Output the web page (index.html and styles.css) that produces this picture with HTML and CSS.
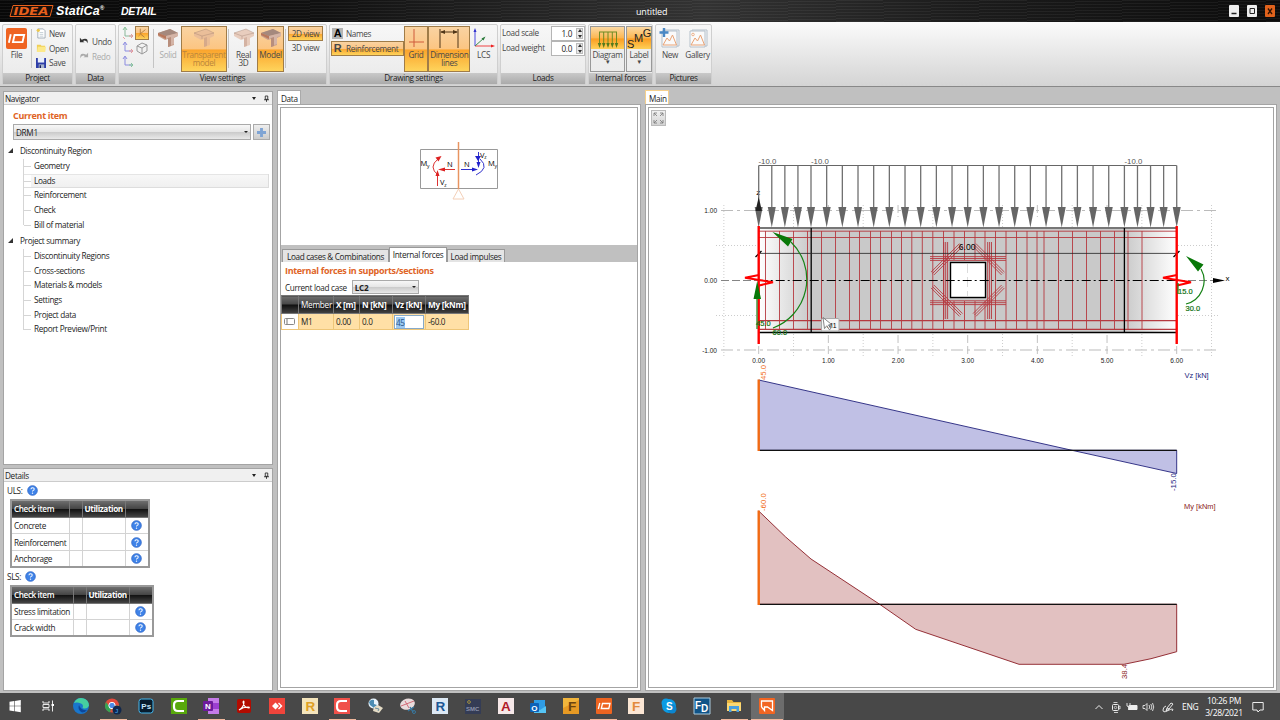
FILE: index.html
```html
<!DOCTYPE html>
<html lang="en">
<head>
    <meta charset="UTF-8">
    <meta name="viewport" content="width=device-width, initial-scale=1.0">
    <title>IDEA StatiCa Detail - untitled</title>
    <link rel="stylesheet" href="styles.css">
</head>
<body>
    <!-- shared symbols -->
    <svg class="defs">
        <symbol id="help" viewBox="0 0 12 12">
            <circle cx="6" cy="6" r="5.3" fill="#3f83e8" stroke="#2a62c4" stroke-width=".8"/>
            <path d="M4.3 4.7q0-1.7 1.8-1.7t1.7 1.5q0 .8-1 1.4-.8.5-.8 1.2" fill="none" stroke="#fff" stroke-width="1.1"/>
            <circle cx="6" cy="8.9" r=".75" fill="#fff"/>
        </symbol>
        <symbol id="beam" viewBox="0 0 22 20">
            <path d="M1 5l12-4 8 4v3l-4 2v7l-6 2v-8l-3 1-7-4z" fill="#c9a08c"/>
            <path d="M1 5l12-4 8 4-12 3z" fill="#a5897d"/>
            <path d="M1 5l8 3v3l-8-4z" fill="#b9785c"/>
            <path d="M9 8l12-3v3l-4 1v7l-6 2v-8l-2 1z" fill="#d4b4a6"/>
            <path d="M11 10l3-1v9l-3 1z" fill="#b88e7c"/>
        </symbol>
        <symbol id="beam-clear" viewBox="0 0 22 20">
            <path d="M1 5l12-4 8 4v3l-4 2v7l-6 2v-8l-3 1-7-4z" fill="#dfb29a" fill-opacity=".6"/>
            <path d="M1 5l8 3 12-3M1 5l12-4 8 4M9 8v3" fill="none" stroke="#96786a" stroke-opacity=".6" stroke-width=".6"/>
            <path d="M11 10l3-1v9l-3 1z" fill="#b88e7c" fill-opacity=".4"/>
        </symbol>
    </svg>

    <header class="titlebar">
        <svg class="brand" viewBox="0 0 44 14">
            <path d="M3.5 1.500h40l-3 11H.5z" fill="#17100c" stroke="#e8601c"/>
            <text x="4" y="11" textLength="35" lengthAdjust="spacingAndGlyphs">IDEA</text>
        </svg>
        <span class="brand-name">StatiCa<sup>®</sup></span>
        <span class="brand-product">DETAIL</span>
        <span class="doc-title">untitled</span>
        <div class="win-buttons">
            <svg viewBox="0 0 10 12"><path d="M2.500 8.500h5" stroke="#222" stroke-width="1.500"/></svg>
            <svg viewBox="0 0 10 12"><path d="M3 3.500h4.500v5H3z" fill="none" stroke="#222"/></svg>
            <svg class="close" viewBox="0 0 10 12"><path d="M3 3.500l4 5.500M7 3.500L3 9" stroke="#2c1000" stroke-width="1.300"/></svg>
        </div>
    </header>

    <div class="ribbon">
        <section class="group g-project">
            <div class="group-body">
                <div class="tool w-file">
                    <svg class="ico-file" viewBox="0 0 22 22">
                        <rect width="22" height="22" rx="2" fill="#ef6422"/>
                        <path d="M5 6.500L3 15.500M9 7.300h10l-1.700 7.500H7.300z" fill="none" stroke="#fff" stroke-width="2"/>
                    </svg>
                    <span>File</span>
                </div>
                <i class="sep"></i>
                <div class="stack menu">
                    <div><svg viewBox="0 0 11 11"><path d="M2 1h6l2 2v8H2z" fill="#fff" stroke="#8b98a6" stroke-width=".8"/><path d="M4 5h4M4 7h4M4 9h4" stroke="#9cabb8" stroke-width=".6"/><circle cx="2.500" cy="2.500" r="1.800" fill="#edc84c"/></svg>New</div>
                    <div><svg viewBox="0 0 11 11"><path d="M1 2h4l1 1h4v7H1z" fill="#f0cf57"/><path d="M1 10l1-6h9l-1 6z" fill="#fce98a"/></svg>Open</div>
                    <div><svg viewBox="0 0 11 11"><path d="M0 0h11v11H0z" fill="#2e3ea8"/><path d="M2 0h7v5H2z" fill="#e8eefc"/><path d="M3 7h6v4H3z" fill="#a8b4cc"/><path d="M4 8h1.500v3H4z" fill="#17205a"/></svg>Save</div>
                </div>
            </div>
            <h6>Project</h6>
        </section>

        <section class="group g-data">
            <div class="group-body">
                <div class="stack undo">
                    <div><svg viewBox="0 0 11 9"><path d="M1 1v5h5L4.400 4.500Q8 2.800 9.500 7 10.500 0 3 3z" fill="#333"/></svg>Undo</div>
                    <div class="off"><svg viewBox="0 0 11 9"><path d="M10 1v5H5l1.600-1.500Q3 2.800 1.500 7 .5 0 8 3z" fill="#aaa"/></svg>Redo</div>
                </div>
            </div>
            <h6>Data</h6>
        </section>

        <section class="group g-view">
            <div class="group-body">
                <div class="axes">
                    <svg viewBox="0 0 14 14"><path d="M4 2v8h7" fill="none" stroke="#8ab89a"/><path d="M8 10h4M10 8l2 2-2 2" fill="none" stroke="#e59a9a"/><path d="M2 4l2-3 2 3" fill="none" stroke="#87c59a"/><path d="M2 11l2 2" stroke="#e7a0a0"/></svg>
                    <svg class="on" viewBox="0 0 14 14"><path d="M5 2v6l5 4M5 8l6-5" fill="none" stroke="#aa783c"/><path d="M3 11l2-3" stroke="#d28c38"/></svg>
                    <svg viewBox="0 0 14 14"><path d="M4 2v8h7" fill="none" stroke="#8c8ce0"/><path d="M8 10h4M10 8l2 2-2 2" fill="none" stroke="#e59a9a"/><path d="M2 4l2-3 2 3" fill="none" stroke="#8c8ce0"/></svg>
                    <svg viewBox="0 0 14 14"><path d="M2 5l5-3 5 2v6l-5 3-5-3zM2 5l5 2 5-3M7 7v6" fill="none" stroke="#999"/></svg>
                    <svg viewBox="0 0 14 14"><path d="M4 2v8h7" fill="none" stroke="#8c8ce0"/><path d="M8 10h4M10 8l2 2-2 2" fill="none" stroke="#87c59a"/><path d="M2 4l2-3 2 3" fill="none" stroke="#8c8ce0"/></svg>
                </div>
                <i class="sep"></i>
                <div class="tool w-solid off"><svg class="ico"><use href="#beam"/></svg><span>Solid</span></div>
                <div class="tool w-trans on faded"><svg class="ico"><use href="#beam-clear"/></svg><span>Transparent<br>model</span></div>
                <i class="sep"></i>
                <div class="tool w-real"><svg class="ico"><use href="#beam-clear"/></svg><span>Real<br>3D</span></div>
                <div class="tool w-model on"><svg class="ico"><use href="#beam"/></svg><span>Model</span></div>
                <i class="sep"></i>
                <div class="views">
                    <div class="on">2D view</div>
                    <div>3D view</div>
                </div>
            </div>
            <h6>View settings</h6>
        </section>

        <section class="group g-drawing">
            <div class="group-body">
                <div class="labels">
                    <div><b class="letter dark">A</b>Names</div>
                    <div class="on"><b class="letter">R</b>Reinforcement</div>
                </div>
                <div class="tool w-grid on"><svg class="ico" viewBox="0 0 22 20"><path d="M9 1v18M4 14h15" stroke="#cf5b3b" fill="none"/></svg><span>Grid</span></div>
                <div class="tool w-dim on"><svg class="ico" viewBox="0 0 22 20"><path d="M2 1v19M20 1v19M3 4h16" stroke="#513719" fill="none"/><path d="M2 4l5-2v4zM20 4l-5-2v4z" fill="#513719"/></svg><span>Dimension<br>lines</span></div>
                <div class="tool w-lcs"><svg class="ico" viewBox="0 0 22 20"><path d="M2 18V2" stroke="#4b4be0"/><path d="M2 18h17" stroke="#e44"/><path d="M2 18l9-8" stroke="#3d8c4d"/><path d="M2 0L.5 4h3z" fill="#33c"/><path d="M22 18l-4-1.500v3z" fill="#e22"/><path d="M12.500 8.500l-4 2 2 2z" fill="#2b7a3b"/></svg><span>LCS</span></div>
            </div>
            <h6>Drawing settings</h6>
        </section>

        <section class="group g-loads">
            <div class="group-body">
                <div class="fields">
                    <label>Load scale</label><div class="spin"><span>1.0</span><i></i></div>
                    <label>Load weight</label><div class="spin"><span>0.0</span><i></i></div>
                </div>
            </div>
            <h6>Loads</h6>
        </section>

        <section class="group g-forces">
            <div class="group-body">
                <div class="tool drop w-diagram"><svg class="ico" viewBox="0 0 22 20"><path d="M2 4h18M2.500 4v13M6.700 4v13M11 4v13M15.300 4v13M19.500 4v13" stroke="#718b22" fill="none"/><path d="M.8 15h3.400l-1.700 5zM5 15h3.400l-1.700 5zM9.300 15h3.400L11 20zM13.600 15H17l-1.700 5zM17.800 15h3.400l-1.700 5z" fill="#557b1d"/></svg><span>Diagram</span><em>▾</em></div>
                <div class="tool drop w-label"><div class="smg"><b>S</b><b>M</b><b>G</b></div><span>Label</span><em>▾</em></div>
            </div>
            <h6>Internal forces</h6>
        </section>

        <section class="group g-pictures">
            <div class="group-body">
                <div class="tool w-new"><svg class="ico" viewBox="0 0 22 20"><path d="M5 2h15v16H5z" fill="#f5f7f9" stroke="#b5c0ca"/><path d="M3 3h15v16H3z" fill="#fafafa" stroke="#b5c0ca"/><path d="M4 17l4-7 2.500 3 3-6 4 10z" fill="none" stroke="#e9a274"/><path d="M5 0v9M.5 4.500h9" stroke="#4a88c4" stroke-width="2.400"/></svg><span>New</span></div>
                <div class="tool w-gallery"><svg class="ico" viewBox="0 0 22 20"><path d="M5 2h15v16H5z" fill="#f5f7f9" stroke="#b5c0ca"/><path d="M3 3h15v16H3z" fill="#fafafa" stroke="#b5c0ca"/><path d="M4 17l4-7 2.500 3 3-6 4 10z" fill="none" stroke="#e9a274"/><circle cx="6" cy="6.500" r="1.300" fill="none" stroke="#e9a274" stroke-width=".8"/></svg><span>Gallery</span></div>
            </div>
            <h6>Pictures</h6>
        </section>
    </div>

    <main class="workspace">
        <aside class="left">
            <section class="panel navigator">
                <div class="panel-head"><span>Navigator</span><i class="caret"></i><svg class="pin" viewBox="0 0 6 8"><path d="M1.500 1h3v4h-3zM0 5.500h6M3 5.500V8" fill="none" stroke="#222"/></svg></div>
                <h2>Current item</h2>
                <div class="item-row">
                    <div class="combo item-combo">DRM1<i class="caret"></i></div>
                    <div class="add"><svg viewBox="0 0 10 10"><path d="M5 0v10M0 5h10" stroke="#7fa4d4" stroke-width="3.200"/></svg></div>
                </div>
                <div class="tree">
                    <div class="node">Discontinuity Region</div>
                    <ul>
                        <li>Geometry</li>
                        <li class="selected">Loads</li>
                        <li>Reinforcement</li>
                        <li>Check</li>
                        <li>Bill of material</li>
                    </ul>
                    <div class="node">Project summary</div>
                    <ul>
                        <li>Discontinuity Regions</li>
                        <li>Cross-sections</li>
                        <li>Materials &amp; models</li>
                        <li>Settings</li>
                        <li>Project data</li>
                        <li>Report Preview/Print</li>
                    </ul>
                </div>
            </section>

            <section class="panel details">
                <div class="panel-head"><span>Details</span><i class="caret"></i><svg class="pin" viewBox="0 0 6 8"><path d="M1.500 1h3v4h-3zM0 5.500h6M3 5.500V8" fill="none" stroke="#222"/></svg></div>
                <div class="check-title">ULS: <svg class="help"><use href="#help"/></svg></div>
                <table class="checks uls">
                    <tr><th>Check item</th><th></th><th>Utilization</th><th></th></tr>
                    <tr><td>Concrete</td><td></td><td></td><td><svg class="help"><use href="#help"/></svg></td></tr>
                    <tr><td>Reinforcement</td><td></td><td></td><td><svg class="help"><use href="#help"/></svg></td></tr>
                    <tr><td>Anchorage</td><td></td><td></td><td><svg class="help"><use href="#help"/></svg></td></tr>
                </table>
                <div class="check-title">SLS: <svg class="help"><use href="#help"/></svg></div>
                <table class="checks sls">
                    <tr><th>Check item</th><th></th><th>Utilization</th><th></th></tr>
                    <tr><td>Stress limitation</td><td></td><td></td><td><svg class="help"><use href="#help"/></svg></td></tr>
                    <tr><td>Crack width</td><td></td><td></td><td><svg class="help"><use href="#help"/></svg></td></tr>
                </table>
            </section>
        </aside>

        <section class="dock data-dock">
            <div class="dock-tab">Data</div>
            <div class="frame">
                <div class="frame-inner">
                    <div class="scheme">
                        <!-- sign convention of the internal forces -->
                        <svg viewBox="420 142 79 59">
                            <path d="M420.500 149.500h77v39h-77z" fill="none" stroke="#999"/>
                            <path d="M458.500 142v47" stroke="#e89460" stroke-width="1.500"/>
                            <path d="M458.500 189l-5.500 10h11z" fill="none" stroke="#f4d0b8"/>
                            <g fill="none" stroke="#d33">
                                <path d="M455 169.500h-14M437.500 186v-13M438 175q-10-8 0-16"/>
                            </g>
                            <path d="M438 169.500l7-2v4zM437.500 170l-2 6h4zM441.500 156l-6 1.500 3 4z" fill="#d22"/>
                            <g fill="none" stroke="#33c">
                                <path d="M461 169.500h12M478.500 152v13M476 175q14-7 4-16"/>
                            </g>
                            <path d="M478 169.500l-6-2v4zM478.500 168l-2-6h4zM475 156l6 0-3 5z" fill="#22c"/>
                            <g class="scheme-text">
                                <text x="420.500" y="166">M<tspan class="sub" dy="1.500">y</tspan></text>
                                <text x="447" y="166.500">N</text>
                                <text x="440" y="185">V<tspan class="sub" dy="1.500">z</tspan></text>
                                <text x="464" y="166.500">N</text>
                                <text x="480" y="157.500">V<tspan class="sub" dy="1.500">z</tspan></text>
                                <text x="488" y="166">M<tspan class="sub" dy="1.500">y</tspan></text>
                            </g>
                        </svg>
                    </div>
                    <div class="tabs">
                        <span class="t1">Load cases &amp; Combinations</span>
                        <span class="t2 active">Internal forces</span>
                        <span class="t3">Load impulses</span>
                    </div>
                    <div class="forces">
                        <h2>Internal forces in supports/sections</h2>
                        <div class="case-row">Current load case <div class="combo case-combo"><b>LC2</b><i class="caret"></i></div></div>
                        <table class="force-table">
                            <tr><th></th><th class="light">Member</th><th>X [m]</th><th>N [kN]</th><th>Vz [kN]</th><th>My [kNm]</th></tr>
                            <tr><td class="row-mark"><svg viewBox="0 0 11 7"><rect x=".5" y=".5" width="10" height="6" rx="1" fill="#fff" stroke="#888"/><path d="M3 1v5" stroke="#777"/></svg></td><td>M1</td><td>0.00</td><td>0.0</td><td class="edit"><div><mark>45</mark></div></td><td>-60.0</td></tr>
                        </table>
                    </div>
                </div>
            </div>
        </section>

        <section class="dock main-dock">
            <div class="dock-tab current">Main</div>
            <div class="frame">
                <div class="frame-inner">
                    <svg class="canvas" viewBox="649 108 625 579">
                        <defs>
                            <linearGradient id="fadeLeft"><stop offset="0" stop-color="#fff"/><stop offset="1" stop-color="#c9c9c9"/></linearGradient>
                            <linearGradient id="fadeRight"><stop offset="0" stop-color="#c9c9c9"/><stop offset="1" stop-color="#fff"/></linearGradient>
                            <linearGradient id="btn" x2="0" y2="1"><stop offset="0" stop-color="#f2f2f2"/><stop offset="1" stop-color="#d2d2d2"/></linearGradient>
                        </defs>
                        <!-- zoom to fit -->
                        <rect x="651.500" y="110.500" width="14" height="15" fill="url(#btn)" stroke="#bbb"/>
                        <path d="M654 116v-3h3M660 113h3v3M663 120v3h-3M657 123h-3v-3M654 113l3 3M663 113l-3 3M663 123l-3-3M654 123l3-3" fill="none" stroke="#777" stroke-width=".8"/>

                        <g id="grid"></g>

                        <!-- member -->
                        <rect x="758.700" y="228" width="52.300" height="104" fill="url(#fadeLeft)"/>
                        <rect x="811" y="228" width="313.400" height="104" fill="#c9c9c9"/>
                        <rect x="1124.400" y="228" width="52.300" height="104" fill="url(#fadeRight)"/>
                        <g id="stirrups" class="bar"></g>
                        <path class="bar" d="M759 231.200h418M759 237.500h418"/>
                        <path class="bar thick" d="M759 320.700h418M759 329.400h418"/>
                        <path d="M758.700 228h418" stroke="#777" stroke-width="2"/>
                        <path d="M758.700 332.500h418" stroke="#000" stroke-width="1.500"/>
                        <path d="M811.200 228v104M1124.400 228v104" stroke="#000" stroke-width="1.300"/>

                        <!-- opening -->
                        <rect x="950.500" y="262.500" width="35" height="35" fill="#fff" stroke="#000" stroke-width="1.400"/>
                        <path d="M967.500 263v34" stroke="#ccc" stroke-width=".7" stroke-dasharray="10 4"/>
                        <g id="openingBars" class="bar"></g>

                        <path d="M758.700 253.400h418" stroke="#222" stroke-width=".8"/>
                        <path d="M755.500 257l6-6M1173.500 257l6-6" stroke="#000" stroke-width="1.300"/>
                        <text x="958.800" y="250" class="dim">6.00</text>
                        <path d="M721 280.500h37M1177 280.500h37" stroke="#777" stroke-width=".9" stroke-dasharray="8 3"/>
                        <path d="M758.700 280.500h418" stroke="#000" stroke-width="1.200" stroke-dasharray="9 3 2 3"/>
                        <path d="M1213 278v5l12-2.500z" fill="#000"/>
                        <text x="756.300" y="194.500" class="axis">z</text>
                        <text x="1225.500" y="280.500" class="axis">x</text>

                        <g id="loads"></g>
                        <path d="M755.500 211l3.200-14 3.200 14z" fill="#222"/>
                        <g class="load-text"><text x="758.500" y="163.500">-10.0</text><text x="811" y="163.500">-10.0</text><text x="1124.500" y="163.500">-10.0</text></g>

                        <!-- cut ends -->
                        <path class="cut" d="M758.700 226v118M1176.700 226v118"/>
                        <path class="zig" d="M759 275l-14 2.800 28 4.500-14 3.200M1177 275l-14 2.800 28 4.500-14 3.200"/>

                        <!-- end forces and moments -->
                        <g class="moment">
                            <path d="M791 242A52 52 0 0 1 773 328M757 298v31M1201 269A24 24 0 0 1 1186 304M1178 283v11"/>
                            <path class="head" d="M772.500 232l20 7-4.500 7.500zM753.500 299h7.500l-3.800-18zM1186 256l17.500 8.500-5.500 7z"/>
                        </g>
                        <g class="moment-text"><text x="756" y="326">45.0</text><text x="772.500" y="335">60.0</text><text x="1178" y="294">15.0</text><text x="1185.500" y="311">30.0</text></g>

                        <g id="scale" class="scale"></g>

                        <!-- shear force -->
                        <path d="M758.700 380L1072 450.300h104.700v23.200L1072 450.300H758.700z" fill="#c0c0e5" stroke="#23237d" stroke-width=".9"/>
                        <path d="M758.700 450.400h418" stroke="#111" stroke-width="1.100"/>
                        <path d="M758.700 379.500v71.500" class="section-line"/>
                        <text transform="translate(766 380) rotate(-90)" class="value orange">45.0</text>
                        <text transform="translate(1175.500 491) rotate(-90)" class="value blue">-15.0</text>
                        <text x="1184.500" y="378" class="unit blue">Vz [kN]</text>

                        <!-- bending moment -->
                        <path d="M758.700 511l27 26 25.300 22 69 45.500 35.700 24.800 103.300 35H1124l27-5.600 25.700-7v-47.400H758.700z" fill="#e2c1c1" stroke="#8a1c24" stroke-width=".9"/>
                        <path d="M758.700 604.400h418" stroke="#111" stroke-width="1.100"/>
                        <path d="M758.700 510.500v94.500" class="section-line"/>
                        <text transform="translate(766 511) rotate(-90)" class="value orange">-60.0</text>
                        <text transform="translate(1127 679) rotate(-90)" class="value red">38.4</text>
                        <text x="1184" y="508.500" class="unit red">My [kNm]</text>

                        <!-- tooltip and pointer -->
                        <rect x="821.500" y="318.500" width="17.500" height="12.500" rx="1" fill="#f6f6f6" stroke="#aaa"/>
                        <text x="827" y="328" class="tip">M1</text>
                        <path d="M823 317.500l1.500 11 2.300-2.800 2.500 4 1.500-1-2.300-3.800 3-.5z" fill="#fff" stroke="#555" stroke-width=".7"/>
                    </svg>
                </div>
            </div>
        </section>
    </main>

    <footer class="taskbar">
        <div class="apps">
            <div><svg viewBox="0 0 16 16"><path d="M2.500 3.700l4.700-.7v4.800H2.500zM7.800 2.900l6-.9v5.800h-6zM2.500 8.300h4.700v4.900l-4.700-.7zM7.800 8.300h6v5.900l-6-.9z" fill="#fff"/></svg></div>
            <div><svg viewBox="0 0 16 16"><path d="M3 3v2h6V3M3 13v-2h6v2M3 6.500h6v3H3zM12.500 2.500v11" fill="none" stroke="#e8e8e8"/><path d="M11.500 6h2.500v2h-2.500z" fill="#fff"/></svg></div>
            <div><svg viewBox="0 0 16 16"><circle cx="8" cy="8" r="8" fill="#1976cc"/><path d="M1 5Q4-1 10 .3q6 1.500 6 7.500-2 4-6.500 2.200Q11 7 8 5.500 4 4 1 5z" fill="#46cfa0"/><path d="M6 7q-2 5 3 7.500 3 0 5-2.500-6 1-8-5z" fill="#0c479b"/></svg></div>
            <div class="run"><svg viewBox="0 0 16 16"><circle cx="7" cy="7.500" r="7" fill="#e34a3d"/><path d="M1 4l5 7-1 3.500Q-1 12 0 7z" fill="#35a553"/><path d="M7 7.500h7Q14 13 8 14.500z" fill="#f7c93f"/><circle cx="7" cy="7.500" r="3.200" fill="#4b8ae8" stroke="#fff"/><circle cx="12" cy="12" r="4.500" fill="#10274c"/><text x="10" y="14.500" class="g5 c-sky">J</text></svg></div>
            <div><svg viewBox="0 0 16 16"><rect x="1" y="1" width="14" height="14" rx="2.500" fill="#071c2d" stroke="#45b7ee"/><text x="3.300" y="11" class="g8 c-ice">Ps</text></svg></div>
            <div><svg viewBox="0 0 16 16"><path d="M0 0h16v16H0z" fill="#58a80c"/><path d="M13 3H7Q3 3 3 7v2q0 4 4 4h6" fill="none" stroke="#fff" stroke-width="2.200"/></svg></div>
            <div class="run"><svg viewBox="0 0 16 16"><path d="M5 0h11v16H5z" fill="#c57be8"/><path d="M5 5h11v6H5z" fill="#9c3ed0"/><rect y="3" width="10" height="10" rx="1" fill="#6d1a9c"/><text x="2" y="11" class="g8 c-white">N</text></svg></div>
            <div><svg viewBox="0 0 16 16"><rect x="1" y="1" width="14" height="14" rx="2" fill="#b30b00"/><path d="M3 12q5-3 5-8 0-2-1 0 1 6 6 6 1-1-1-1-5 0-9 3z" fill="none" stroke="#fff" stroke-width="1.100"/></svg></div>
            <div><svg viewBox="0 0 16 16"><path d="M0 0h16v16H0z" fill="#ef443b"/><path d="M6.500 4.500L3 8l3.500 3.500L10 8zM10 4.500L13.500 8 10 11.500l-1-1L11.500 8 9 5.500z" fill="#fff"/></svg></div>
            <div><svg viewBox="0 0 16 16"><path d="M0 0h16v16H0z" fill="#f4e4bb"/><text x="3.500" y="13" class="g14 c-gold">R</text></svg></div>
            <div class="run"><svg viewBox="0 0 16 16"><path d="M0 0h16v16H0z" fill="#f0514a"/><path d="M13 3H7Q3 3 3 7v2q0 4 4 4h6" fill="none" stroke="#fff" stroke-width="2.200"/></svg></div>
            <div><svg viewBox="0 0 16 16"><circle cx="6.500" cy="5.500" r="5" fill="#e8f4fc"/><path d="M2 4q2-3 5-2v4l3 1-3 3-4-3z" fill="#4b8db4"/><path d="M7 9l4-2 5 3-4 5-6-2z" fill="#e5dcc6"/><path d="M8 10l4 1-1 2" stroke="#698e9e" fill="none"/></svg></div>
            <div><svg viewBox="0 0 16 16"><ellipse cx="7.500" cy="6" rx="7.500" ry="5.500" fill="#e9dcdc" transform="rotate(-15 8 6)"/><path d="M1 8l13-5M5 3l4 7" stroke="#d36c78"/><path d="M10 9l3 5M8 13l6-4" stroke="#3878a0" stroke-width="1.400"/><circle cx="14" cy="14" r="1.500" fill="none" stroke="#3878a0"/></svg></div>
            <div><svg viewBox="0 0 16 16"><path d="M0 0h16v16H0z" fill="#dce8f4"/><text x="3.500" y="13" class="g14 c-revit">R</text></svg></div>
            <div><svg viewBox="0 0 16 16"><path d="M0 1h16v15H0z" fill="#343c55"/><text x="1" y="13" class="g6 c-smc">SMC</text><circle cx="4" cy="4" r="1.400" fill="none" stroke="#a18f3e"/></svg></div>
            <div><svg viewBox="0 0 16 16"><path d="M0 0h16v16H0z" fill="#f6e8e8"/><text x="3" y="13" class="g14 c-cad">A</text></svg></div>
            <div><svg viewBox="0 0 16 16"><path d="M4 2h11v12H4z" fill="#2f9ce4"/><path d="M4 9l6 3 6-4v7H4z" fill="#55c4f4"/><rect y="5" width="9" height="9" rx="1" fill="#0c62b8"/><text x="1.200" y="12.500" class="g8 c-white">O</text></svg></div>
            <div><svg viewBox="0 0 16 16"><path d="M0 0h16v16H0z" fill="#f2b53c"/><path d="M0 10L16 2v14H0z" fill="#e79a24"/><text x="5" y="13" class="g14 c-brown">F</text></svg></div>
            <div class="run"><svg viewBox="0 0 16 16"><rect width="16" height="16" rx="1" fill="#ee6420"/><path d="M3.800 5l-1.500 6M6.500 5.500h7.500l-1.200 5H5.300z" fill="none" stroke="#fff" stroke-width="1.300"/></svg></div>
            <div><svg viewBox="0 0 16 16"><path d="M0 0h16v16H0z" fill="#fbe6d4"/><text x="4" y="13" class="g14 c-orange">F</text></svg></div>
            <div><svg viewBox="0 0 16 16"><circle cx="8" cy="8" r="7" fill="#0b9be4"/><circle cx="5" cy="5" r="4.500" fill="#0b9be4"/><circle cx="11" cy="11" r="4.500" fill="#0b86d0"/><text x="5" y="12" class="g11 c-white">S</text></svg></div>
            <div><svg viewBox="0 0 16 16"><path d="M0 0h16v16H0z" fill="#105488" stroke="#a9c9dc"/><text x="1" y="10.500" class="g11 c-white">F</text><text x="7" y="14" class="g11 c-white">D</text></svg></div>
            <div class="run"><svg viewBox="0 0 16 16"><path d="M1 2h5l1.500 2H15v9H1z" fill="#e9b53f"/><path d="M1 5h14v8H1z" fill="#fbd873"/><path d="M3 8h10v6h-2.500v-3h-5v3H3z" fill="#4a9fdf"/></svg></div>
            <div class="run focus"><svg viewBox="0 0 16 16"><rect width="16" height="16" rx="1" fill="#f26522"/><path d="M2.500 9v-6h11v9.500L8.500 9H5.500v3.500L2.500 9" fill="none" stroke="#fff" stroke-width="1.300"/></svg></div>
        </div>
        <div class="tray">
            <svg class="chev" viewBox="0 0 10 10"><path d="M1.500 7L5 3.500 8.500 7" fill="none" stroke="#eee"/></svg>
            <svg viewBox="0 0 12 12"><rect x="2.500" y="3.500" width="6" height="6" rx="1" fill="none" stroke="#eee"/><circle cx="5.500" cy="6.500" r="1.200" fill="none" stroke="#ddd" stroke-width=".8"/><path d="M8.500 5.500L10 5v3l-1.500-.5M3.500 1.500h4M4 11.500h4" fill="none" stroke="#ddd" stroke-width=".9"/></svg>
            <svg viewBox="0 0 12 12"><path d="M3 4.500h8v4H3z" fill="#eee" stroke="#eee"/><path d="M1 2v3q2 2 3 0V2M2.500 5v4" fill="none" stroke="#ddd"/></svg>
            <svg viewBox="0 0 12 12"><path d="M1 4.500h2l2-2v7l-2-2H1zM7 4q1.500 2 0 4M8.800 3q2.200 3 0 6M10.500 2q2.500 4 0 8" fill="none" stroke="#e5e5e5" stroke-width=".9"/></svg>
            <svg class="pen" viewBox="0 0 12 12"><path d="M5 7l4-5 2 1-4 5zM5 7l-1 3 3-2M4 5Q1 6 1 9t4 1 5-2q2 0 0 2" fill="none" stroke="#e8e8e8"/></svg>
            <span class="lang">ENG</span>
            <div class="clock">10:26 PM<br>3/28/2021</div>
            <svg class="note" viewBox="0 0 12 12"><path d="M.8 1.500h10.400v7.500H8L6 11 5 9H.8z" fill="none" stroke="#eee"/></svg>
        </div>
    </footer>

    <script>
        // Member runs from 0 to 6 m, one metre is 69.67 px
        const X0 = 758.7;
        const M = 69.667;

        // Line load with arrows along the top edge
        let loads = `<path d="M${X0} 165.500H1176.700" stroke="#666" stroke-width="1.100"/>`;
        const arrows = [];
        for (let i = 0; i < 4; i++) arrows.push(X0 + i * 13.08);
        for (let i = 0; i < 20; i++) arrows.push(811 + i * 15.67);
        for (let i = 0; i <= 4; i++) arrows.push(1124.4 + i * 13.08);
        arrows.forEach(x => {
            loads += `<path d="M${x} 165.500v44" stroke="#707070" stroke-width="1.300"/>`;
            loads += `<path d="M${x - 4} 207h8l-4 20.500z" fill="#666"/>`;
        });
        document.getElementById('loads').innerHTML = loads;

        // Stirrups
        const stirrups = [765.5, 779.5, 793.5, 807.5, 821.5, 835.5, 849.5, 859.5, 870.5, 880.5, 891.5, 901.5, 911.8, 922.3, 932.8, 943.5,
            995.5, 1006, 1016.5, 1027, 1037, 1044, 1058.5, 1072.5, 1086.5, 1100.5, 1114.5, 1128, 1142];
        let bars = '';
        stirrups.forEach(x => { bars += `<path d="M${x} 231v99"/>`; });
        [954, 964.5, 975, 985].forEach(x => { bars += `<path d="M${x} 231v29M${x} 301v29"/>`; });
        document.getElementById('stirrups').innerHTML = bars;

        // Additional bars around the opening, always three side by side
        let opening = '';
        [-1.9, 0, 1.9].forEach(d => {
            opening += `<path d="M930 ${258.5 + d}h76M930 ${302.700 + d}h76M${945.7 + d} 242v77M${989.6 + d} 242v77"/>`;
            const k = d * 0.75;
            opening += `<path d="M${932.5 + k} ${273.5 + k}l28.500-28.500M${932.5 + k} ${286.5 - k}l28.500 28.500M${1003 + k} ${273.5 - k}l-28.500-28.500M${1003 + k} ${286.5 + k}l-28.500 28.500"/>`;
        });
        document.getElementById('openingBars').innerHTML = opening;

        // Background grid and scale
        let grid = '<path d="M721 210.500h498M721 350h498" stroke="#bbb" stroke-dasharray="12 4 3 4"/>';
        grid += '<path d="M716 245.500h503M716 315.500h503" stroke="#ccc" stroke-dasharray="1 2"/>';
        let scale = '';
        for (let i = 0; i <= 6; i++) {
            const x = X0 + i * M;
            grid += `<path d="M${x} 205v12M${x} 335v20" stroke="#bbb" stroke-width=".9" stroke-dasharray="8 3"/>`;
            scale += `<text x="${x}" y="363" text-anchor="middle">${i}.00</text>`;
        }
        for (let i = -0.5; i <= 6.5; i++) {
            grid += `<path d="M${X0 + i * M} 205v152" stroke="#ccc" stroke-dasharray="1 2"/>`;
        }
        scale += '<text x="717" y="213" text-anchor="end">1.00</text><text x="717" y="283" text-anchor="end">0.00</text><text x="717" y="352.500" text-anchor="end">-1.00</text>';
        document.getElementById('grid').innerHTML = grid;
        document.getElementById('scale').innerHTML = scale;
    </script>
</body>
</html>
```
FILE: styles.css
```css
* {
    box-sizing: border-box;
}
body {
    margin: 0;
    width: 1280px;
    height: 720px;
    overflow: hidden;
    display: flex;
    flex-direction: column;
    background: #c0c0c0;
    font-family: "Open Sans", "Noto Sans", sans-serif;
    font-size: 8.2px;
    letter-spacing: -0.32px;
    line-height: 11px;
    color: #1c1c1c;
}
svg {
    display: block;
    overflow: visible;
}
h2, h6, ul {
    margin: 0;
    padding: 0;
    font-weight: normal;
}
.defs {
    position: absolute;
    width: 0;
    height: 0;
}

/* title bar */
.titlebar {
    height: 22px;
    flex: none;
    display: flex;
    align-items: center;
    color: #fff;
    padding: 0 5px 0 9px;
    background: repeating-linear-gradient(178.8deg, rgba(255,255,255,0.05) 0 1px, transparent 1px 3px), linear-gradient(90deg, #080808, #111 25%, #333 55%, #1c1c1c 75%, #0c0c0c);
}
.brand {
    width: 45px;
    height: 14px;
}
.brand text {
    font: italic bold 11px "DejaVu Sans", sans-serif;
    letter-spacing: 0;
    fill: #e8601c;
}
.brand-name {
    width: 65px;
    padding-left: 2px;
    font: italic bold 12.5px "Liberation Sans", sans-serif;
    letter-spacing: 0.1px;
}
.brand-name sup {
    font-size: 6px;
    vertical-align: 5px;
}
.brand-product {
    width: 508px;
    padding-left: 2px;
    font: italic bold 10.5px "Liberation Sans", sans-serif;
    letter-spacing: -0.3px;
}
.doc-title {
    padding-left: 9px;
    font-size: 9px;
    letter-spacing: -0.15px;
}
.win-buttons {
    margin-left: auto;
    display: flex;
    gap: 8px;
}
.win-buttons svg {
    width: 10px;
    height: 12px;
    border-radius: 1px;
    background: #eee;
}
.win-buttons .close {
    background: #e0621c;
}

/* ribbon */
.ribbon {
    height: 65px;
    flex: none;
    display: flex;
    gap: 2px;
    padding: 2px 2px 0;
    background: linear-gradient(#fbfbfb, #d4d4d4);
    border-bottom: 1px solid #888;
    color: #484848;
}
.group {
    height: 61px;
    display: flex;
    flex-direction: column;
    border: 1px solid #cfcfcf;
    border-radius: 2px;
    background: linear-gradient(#f7f7f7, #e9e9e9);
}
.group h6 {
    height: 11px;
    flex: none;
    font-size: 8.2px;
    line-height: 10px;
    text-align: center;
    white-space: nowrap;
    color: #222;
    background: linear-gradient(#c9c9c9, #aaa);
}
.group-body {
    flex: 1;
    display: flex;
    align-items: flex-start;
    padding-top: 1px;
}
.g-project { width: 71px; }
.g-data { width: 41px; }
.g-view { width: 209px; }
.g-drawing { width: 169px; }
.g-loads { width: 86px; }
.g-forces { width: 65px; }
.g-pictures { width: 57px; }
.sep {
    width: 1px;
    height: 39px;
    margin: 3px 1px;
    background: #c4c4c4;
}
.tool {
    height: 46px;
    padding-top: 1px;
    display: flex;
    flex-direction: column;
    align-items: center;
    border: 1px solid transparent;
    text-align: center;
    line-height: 8px;
    white-space: nowrap;
}
.tool span {
    margin-top: 3px;
}
.ico {
    width: 22px;
    height: 20px;
    flex: none;
}
.ico-file {
    width: 21px;
    height: 21px;
    margin-bottom: -1px;
}
.w-file { width: 27px; }
.w-solid { width: 26px; }
.w-trans { width: 46px; }
.w-real { width: 27px; }
.w-model { width: 27px; }
.w-grid { width: 25px; }
.w-dim { width: 42px; }
.w-lcs { width: 27px; }
.w-diagram { width: 35px; margin: 0 1px; }
.w-label { width: 26px; }
.w-new { width: 28px; }
.w-gallery { width: 27px; }
.off {
    color: #aaa;
}
.on {
    border: 1px solid #a07c48;
    background: linear-gradient(#f9d3a2 0, #fcc582 50%, #fba42c 52%, #fed45c);
}
.faded {
    color: #b9853c;
}
.stack {
    display: flex;
    flex-direction: column;
}
.stack div {
    height: 14.7px;
    display: flex;
    align-items: center;
    gap: 3px;
}
.stack svg {
    width: 10px;
    height: 10px;
}
.menu {
    padding-left: 3px;
}
.undo {
    padding: 8px 0 0 3px;
}
.axes {
    width: 33px;
    padding-left: 2px;
    display: grid;
    grid-template-columns: 14px 15px;
    grid-auto-rows: 14.7px;
}
.axes svg {
    width: 14px;
    height: 14px;
}
.views {
    width: 35px;
    margin-left: 1px;
    text-align: center;
}
.views div {
    height: 15px;
    line-height: 13px;
    white-space: nowrap;
}
.labels {
    width: 74px;
    padding-left: 1px;
}
.labels div {
    height: 15px;
    display: flex;
    align-items: center;
    gap: 3px;
    padding-left: 1px;
}
.labels .on {
    border-width: 1.5px;
    padding-left: 0;
}
.letter {
    width: 11px;
    height: 11px;
    font: bold 11px/11px "Liberation Sans", sans-serif;
    text-align: center;
}
.letter.dark {
    background: #b4b4b4;
    color: #000;
}
.fields {
    display: grid;
    grid-template-columns: 49px 34px;
    grid-auto-rows: 15px;
    line-height: 13px;
    padding-left: 1px;
}
.spin {
    display: flex;
    background: #fff;
    border: 1px solid #b5b5b5;
}
.spin span {
    width: 23px;
    text-align: right;
    padding-right: 3px;
    color: #222;
}
.spin i {
    flex: 1;
    margin: 1px;
    display: flex;
    flex-direction: column;
    justify-content: space-between;
    align-items: center;
    background: #e8e8e8;
    border: 1px solid #bbb;
}
.spin i::before, .spin i::after {
    content: "";
    border: 2px solid transparent;
}
.spin i::before {
    border-top: 0;
    border-bottom: 3px solid #333;
}
.spin i::after {
    border-bottom: 0;
    border-top: 3px solid #333;
}
.drop {
    border-color: #999;
    background: linear-gradient(#fbd9a4 0, #fcb650 25%, #fb9d22 27%, #fed25a 51%, #eee 51%, #ececec);
}
.drop em {
    font: 7px/7px "DejaVu Sans", sans-serif;
}
.smg {
    width: 24px;
    height: 20px;
    flex: none;
    display: flex;
    justify-content: center;
    color: #222;
}
.smg b {
    font: 11px/10px "Liberation Sans", sans-serif;
    letter-spacing: -0.4px;
}
.smg b:nth-child(1) { margin-top: 11px; }
.smg b:nth-child(2) { margin-top: 5px; }

/* workspace */
.workspace {
    flex: 1;
    min-height: 0;
    display: grid;
    grid-template-columns: 270px 364px 632px;
    gap: 4px;
    padding: 4px 3px 3px;
}
.left {
    display: flex;
    flex-direction: column;
    gap: 3px;
}
.panel {
    background: #fff;
    border: 1px solid #a4a4a4;
}
.navigator {
    height: 374px;
}
.details {
    flex: 1;
}
.panel-head {
    height: 13px;
    display: flex;
    align-items: center;
    padding: 0 3px 0 1px;
    background: #f0f0f0;
    border-bottom: 1px solid #ccc;
}
.panel-head span {
    flex: 1;
}
.caret {
    border: 2.5px solid transparent;
    border-top: 3px solid #222;
    border-bottom: 0;
}
.pin {
    width: 5px;
    height: 7px;
    margin-left: 8px;
}
h2 {
    font-size: 9px;
    font-weight: bold;
    color: #e06426;
}
.navigator h2 {
    padding: 5px 0 0 9px;
    height: 19px;
}
.item-row {
    display: flex;
    gap: 2px;
    padding-left: 9px;
}
.combo {
    display: flex;
    justify-content: space-between;
    align-items: center;
    border: 1px solid #aaa;
    padding: 0 2px;
    background: linear-gradient(#f7f7f7, #e6e6e6 48%, #c9c9c9 50%, #e9e9e9);
}
.combo .caret {
    border-width: 2.5px 2px 0;
}
.item-combo {
    width: 238px;
    height: 16px;
}
.add {
    width: 17px;
    height: 16px;
    display: grid;
    place-items: center;
    border: 1px solid #aaa;
    background: linear-gradient(#eee, #ccc);
}
.add svg {
    width: 9px;
    height: 9px;
}
.tree {
    padding: 3px 3px 0 4px;
}
.node {
    height: 15px;
    display: flex;
    align-items: center;
    gap: 7px;
}
.node::before {
    content: "";
    border-left: 5px solid transparent;
    border-bottom: 5px solid #333;
}
.tree ul {
    list-style: none;
    margin: 1px 0 8px 15px;
    border-left: 1px solid #d5d5d5;
    height: 66px;
}
.tree ul:last-child {
    height: 81px;
}
.tree li {
    height: 14.65px;
    line-height: 14px;
    display: flex;
}
.tree li::before {
    content: "";
    width: 7px;
    height: 7px;
    border-bottom: 1px solid #d5d5d5;
    margin-right: 3px;
}
.tree .selected {
    background: linear-gradient(#f8f8f8, #efefef) 7px 0 no-repeat;
    box-shadow: inset -1px 0 #ddd, inset 0 1px #e5e5e5, inset 0 -1px #ddd;
}

/* checks */
.check-title {
    height: 17px;
    display: flex;
    align-items: center;
    gap: 4px;
    padding-left: 3px;
}
.help {
    width: 11px;
    height: 11px;
}
table {
    border-collapse: collapse;
    table-layout: fixed;
    border: 2px solid #999;
}
th {
    padding: 0 2px;
    font-weight: bold;
    text-align: left;
    color: #fff;
    white-space: nowrap;
    border: 1px solid #777;
    background: linear-gradient(#6e6e6e, #454545 48%, #101010 50%, #444);
}
td {
    padding: 0 2px;
    white-space: nowrap;
    border: 1px solid #d3d3d3;
}
.checks {
    margin-left: 6px;
}
.checks th {
    height: 17px;
    letter-spacing: -0.4px;
}
.checks th:first-child {
    font-weight: 600;
}
.checks td {
    height: 16.7px;
}
.uls { width: 140px; }
.sls { width: 144px; }
.checks th:nth-child(1) { width: 58px; }
.sls th:nth-child(1) { width: 62px; }
.checks th:nth-child(2) { width: 13px; }
.checks th:nth-child(3) { width: 43px; text-align: right; }
.checks .help {
    margin: 0 auto;
}

/* docks */
.dock {
    display: flex;
    flex-direction: column;
    margin-top: -1px;
}
.dock-tab {
    width: 24px;
    height: 15px;
    margin-bottom: -1px;
    line-height: 15px;
    padding-left: 3px;
    background: #fff;
    border: 1px solid #aaa;
    border-bottom: 0;
}
.dock-tab.current {
    border-color: #f5d08c;
}
.frame {
    flex: 1;
    padding: 2px;
    background: #fff;
    border: 1px solid #a4a4a4;
}
.frame-inner {
    height: 100%;
    border: 1px solid #a4a4a4;
    display: flex;
    flex-direction: column;
}
.canvas {
    width: 625px;
    height: 579px;
}
.scheme {
    height: 137px;
    padding: 34px 0 0 139px;
}
.scheme svg {
    width: 79px;
    height: 59px;
}
.scheme-text {
    font-size: 7.5px;
}
.sub {
    font-size: 5px;
}
.tabs {
    height: 17px;
    display: flex;
    align-items: flex-end;
    padding-left: 1px;
    background: #c0c0c0;
    line-height: 13px;
}
.tabs span {
    height: 13px;
    text-align: center;
    white-space: nowrap;
    border: 1px solid #999;
    border-bottom: 0;
    background: #e4e4e4;
}
.tabs .active {
    height: 15px;
    background: #fff;
}
.t1 { width: 107px; }
.t2 { width: 58px; }
.t3 { width: 58px; }
.forces h2 {
    height: 17px;
    padding: 3px 0 0 4px;
}
.case-row {
    height: 16px;
    display: flex;
    align-items: center;
    padding-left: 4px;
}
.case-combo {
    width: 67px;
    height: 14px;
    margin-left: 5px;
}
.force-table {
    width: 188px;
    border-width: 1px;
}
.force-table th {
    height: 18px;
    letter-spacing: -0.25px;
}
.force-table .light {
    font-weight: normal;
}
.force-table th:nth-child(1) { width: 17px; }
.force-table th:nth-child(2) { width: 35px; }
.force-table th:nth-child(3) { width: 26px; }
.force-table th:nth-child(4) { width: 33px; }
.force-table th:nth-child(5) { width: 33px; }
.force-table td {
    height: 16px;
    border-color: #eec678;
    background: #ffe0a6;
}
.force-table .row-mark {
    background: #fff;
}
.row-mark svg {
    width: 11px;
    height: 7px;
}
.force-table .edit {
    padding: 0;
}
.edit div {
    height: 14px;
    margin: 0 1px;
    padding: 1px 1px;
    background: #fff;
    border: 1px solid #86a9c9;
}
.edit mark {
    background: #9bc8f2;
    color: #2a5488;
}

/* drawing */
.canvas text {
    font-family: "Liberation Sans", sans-serif;
    letter-spacing: 0;
}
.bar {
    fill: none;
    stroke: #b5393f;
    stroke-width: 0.9;
}
.thick {
    stroke-width: 1.3;
}
.cut {
    stroke: #f00;
    stroke-width: 2.4;
}
.zig {
    fill: none;
    stroke: #f00;
    stroke-width: 2;
}
.moment {
    fill: none;
    stroke: #168216;
    stroke-width: 1.2;
}
.moment .head {
    fill: #087808;
    stroke: none;
}
.canvas .moment-text text {
    font-size: 7.5px;
    fill: #107010;
    stroke: #107010;
    stroke-width: 0.2;
}
.load-text text {
    font-size: 7.8px;
    fill: #555;
}
.scale text {
    font-size: 6.5px;
    fill: #222;
}
.dim {
    font-size: 8.6px;
}
.axis {
    font-size: 8px;
}
.section-line {
    stroke: #f26a12;
    stroke-width: 2.4;
}
.value {
    font-size: 7.8px;
}
.unit {
    font-size: 7.5px;
}
.orange { fill: #f26a12; }
.blue { fill: #23237d; }
.red { fill: #8a1c24; }
.tip {
    font-size: 6.8px;
}

/* taskbar */
.taskbar {
    height: 27px;
    flex: none;
    display: flex;
    justify-content: space-between;
    background: #484848;
    color: #fff;
}
.apps {
    display: flex;
    margin-left: -1px;
}
.apps div {
    width: 32.7px;
    padding-top: 5px;
    display: flex;
    justify-content: center;
}
.apps svg {
    width: 16px;
    height: 16px;
}
.run {
    background: linear-gradient(#f0b79c, #f0b79c) center bottom / 27px 1.5px no-repeat;
}
.run.focus {
    background: linear-gradient(#f0b79c, #f0b79c) center bottom / 32px 1.5px no-repeat #6c6c6c;
}
.apps text {
    font-family: "Liberation Sans", sans-serif;
    font-weight: bold;
    letter-spacing: 0;
}
.g5 { font-size: 6px; }
.g6 { font-size: 6px; }
.g8 { font-size: 8px; }
.g11 { font-size: 10px; }
.g14 { font-size: 13.5px; }
.c-white { fill: #fff; }
.c-sky { fill: #398bd5; }
.c-ice { fill: #c5e8fb; }
.c-gold { fill: #dfa024; }
.c-revit { fill: #1c5795; }
.c-smc { fill: #8d93ab; }
.c-cad { fill: #b01c2a; }
.c-brown { fill: #6a4310; }
.c-orange { fill: #e38b3c; }
.tray {
    display: flex;
    align-items: center;
    padding-right: 16px;
}
.tray svg {
    width: 12px;
    height: 12px;
    margin-right: 4px;
}
.tray .chev {
    width: 10px;
    height: 10px;
    margin-right: 6px;
}
.tray .pen {
    margin: 0 8px 0 4px;
}
.lang {
    width: 21px;
    font-size: 8.5px;
}
.clock {
    width: 42px;
    text-align: center;
    font-size: 8.5px;
    line-height: 12px;
    white-space: nowrap;
}
.tray .note {
    margin: 0 0 0 7px;
}
```
